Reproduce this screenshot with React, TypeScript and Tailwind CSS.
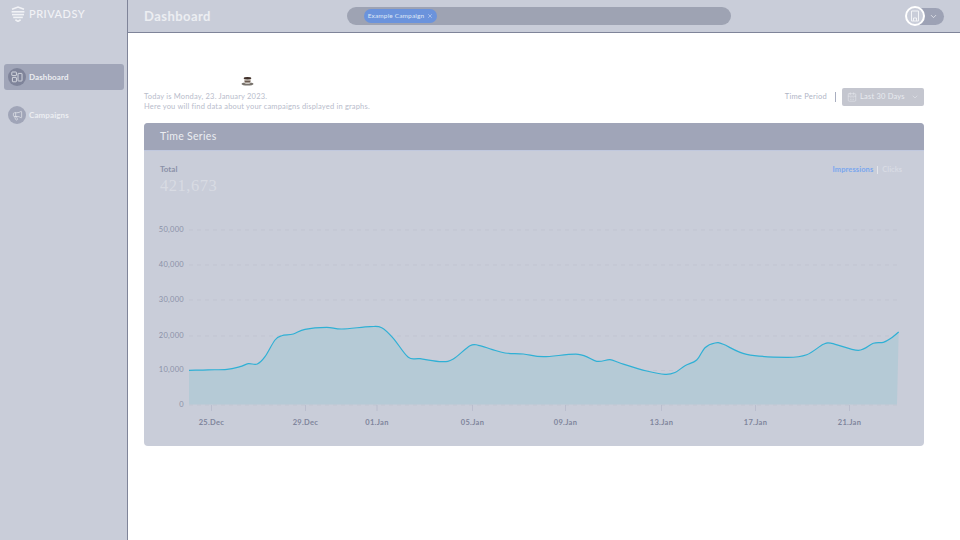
import { CalendarDays, ChevronDown, Megaphone, X } from "lucide-react";

const points: [number, number][] = [
  [189, 370.3], [208, 369.9], [227, 369.3], [240, 366.7], [248.3, 363.7], [257.3, 364], [265, 356.7], [275, 340],
  [281.7, 335.7], [293.3, 334], [305, 329.3], [326.7, 327.3], [341.7, 329], [370, 326.7], [381.7, 327.7], [393.3, 338.3],
  [408.3, 357.3], [420, 358.7], [441.7, 361.7], [453.3, 359], [470, 345.7], [478.3, 345.3], [491.7, 349.3], [505, 353],
  [523.3, 354], [543.3, 356.7], [578.3, 354.3], [596.7, 361.3], [610, 359.7], [620, 363], [646.7, 371], [665, 374.3],
  [675, 372.5], [685, 365.7], [696.7, 360], [705, 347.7], [715, 343], [723.3, 344.3], [746.7, 354.3], [786.7, 357.3],
  [806.7, 354.7], [823.3, 344.3], [831.7, 343.3], [858.3, 350.3], [873.3, 343.3], [883.3, 342.3], [891.7, 337.7], [898.7, 332],
];

function smooth(pts: [number, number][]) {
  let d = `M${pts[0][0]} ${pts[0][1]}`;
  for (let i = 0; i < pts.length - 1; i++) {
    const p0 = pts[Math.max(i - 1, 0)];
    const p1 = pts[i];
    const p2 = pts[i + 1];
    const p3 = pts[Math.min(i + 2, pts.length - 1)];
    const c1x = p1[0] + (p2[0] - p0[0]) / 6;
    const c1y = p1[1] + (p2[1] - p0[1]) / 6;
    const c2x = p2[0] - (p3[0] - p1[0]) / 6;
    const c2y = p2[1] - (p3[1] - p1[1]) / 6;
    d += ` C${c1x.toFixed(1)} ${c1y.toFixed(1)} ${c2x.toFixed(1)} ${c2y.toFixed(1)} ${p2[0]} ${p2[1]}`;
  }
  return d;
}

const yAxis = [
  { label: "50,000", y: 230 },
  { label: "40,000", y: 265 },
  { label: "30,000", y: 300 },
  { label: "20,000", y: 336 },
  { label: "10,000", y: 370.5 },
  { label: "0", y: 405 },
];

const xAxis = [
  { label: "25.Dec", x: 211.5 },
  { label: "29.Dec", x: 305.5 },
  { label: "01.Jan", x: 377 },
  { label: "05.Jan", x: 472.5 },
  { label: "09.Jan", x: 565.5 },
  { label: "13.Jan", x: 661.5 },
  { label: "17.Jan", x: 755.5 },
  { label: "21.Jan", x: 849.5 },
];

const Logo = () => (
  <svg width="14" height="16" viewBox="0 0 14 16" fill="none" stroke="#f1f2f6" strokeWidth="1.6">
    <path d="M1 3.2 7 1l6 2.2" />
    <path d="M.6 5.8h12.8" />
    <path d="M1 8.6h12" />
    <path d="M2.2 11.4h9.6" />
    <path d="M4.4 13.8 7 15.4l2.6-1.6" />
  </svg>
);

const DashboardIcon = () => (
  <svg width="12" height="12" viewBox="0 0 12 12" fill="none" stroke="#e9ebf0" strokeWidth="0.8">
    <rect x="0.8" y="1" width="4.6" height="3.6" rx="0.5" />
    <rect x="1.4" y="6.4" width="4" height="4.4" rx="0.5" />
    <rect x="7" y="2.4" width="4" height="7.6" rx="0.5" />
  </svg>
);

const Coffee = () => (
  <svg width="13" height="10" viewBox="0 0 13 10">
    <ellipse cx="6.5" cy="8" rx="6" ry="1.6" fill="#77726c" />
    <path d="M2.8 2h7.4l-.9 5.2c-1.6.8-4 .8-5.6 0z" fill="#e9e5de" />
    <ellipse cx="6.5" cy="2.2" rx="3.8" ry="1.2" fill="#40302a" />
    <path d="M3.4 4.4h6.2l-.4 2.2H3.8z" fill="#6a5a50" />
  </svg>
);

export default function App() {
  return (
    <div className="flex h-[540px] w-[960px] overflow-hidden bg-white font-['Lato',sans-serif]">
      <aside className="flex w-[128px] shrink-0 flex-col border-r border-[#7f8499] bg-[#c9cdd9]">
        <div className="flex h-[28px] items-center gap-[4px] pl-[11px]">
          <Logo />
          <span className="text-[11px] font-medium tracking-[0.5px] text-[#f1f2f6]">PRIVADSY</span>
        </div>
        <nav className="mt-[36px] flex flex-col gap-[12px] pl-[4px] pr-[3px]">
          <a className="flex h-[26px] items-center gap-[3px] rounded-[3px] bg-[#a0a5b8] pl-[4px]">
            <span className="flex h-[18px] w-[18px] items-center justify-center rounded-full bg-[#7f849a]">
              <DashboardIcon />
            </span>
            <span className="text-[8px] font-bold tracking-[0.1px] text-[#eceef2]">Dashboard</span>
          </a>
          <a className="flex h-[26px] items-center gap-[3px] rounded-[3px] pl-[4px]">
            <span className="flex h-[18px] w-[18px] items-center justify-center rounded-full bg-[#a0a5b8]">
              <Megaphone size={11} color="#e9ebf0" strokeWidth={1.4} />
            </span>
            <span className="text-[8px] font-bold tracking-[0.1px] text-[#eceef2]">Campaigns</span>
          </a>
        </nav>
      </aside>

      <div className="flex min-w-0 flex-1 flex-col">
        <header className="flex h-[33px] shrink-0 items-center border-b border-[#7f8499] bg-[#c9cdd9] pl-[16px] pr-[16px]">
          <h1 className="w-[203px] pt-[1px] text-[13px] font-bold tracking-[0.45px] text-[#eceef2]">Dashboard</h1>
          <div className="flex h-[18px] w-[384px] items-center rounded-full bg-[#9ea3b3] pl-[17px]">
            <span className="flex h-[14px] w-[73px] items-center justify-center gap-[3px] rounded-full bg-[#6b93dc] text-[6.5px] tracking-[0.15px] text-[#dfe7f6]">
              Example Campaign
              <X size={6} strokeWidth={2} />
            </span>
          </div>
          <div className="relative ml-auto flex h-[17px] w-[38px] items-center justify-end rounded-full bg-[#9da2b5] pr-[6px]">
            <ChevronDown size={9} color="#eceef2" strokeWidth={2} />
            <span className="absolute -left-[1px] -top-[2px] flex h-[20px] w-[20px] items-center justify-center rounded-full border-2 border-white bg-[#c9cdd9]">
              <svg width="10" height="12" viewBox="0 0 10 12" fill="none" stroke="#f2f3f6" strokeWidth="1">
                <path d="M1.5 1h7v10H1.5z" />
                <path d="M3.5 11V8h3v3" />
              </svg>
            </span>
          </div>
        </header>

        <main className="flex flex-1 flex-col pl-[16px] pr-[36px]">
          <div className="h-[41px] pl-[97px] pt-[43px]">
            <Coffee />
          </div>
          <div className="mt-[16px] flex items-start justify-between">
            <div className="text-[7.5px] leading-[10px] tracking-[0.18px] text-[#b8bccb]">
              <p>Today is Monday, 23. January 2023.</p>
              <p>Here you will find data about your campaigns displayed in graphs.</p>
            </div>
            <div className="-mt-[4px] flex items-center">
              <span className="text-[7.5px] tracking-[0.25px] text-[#b0b5c6]">Time Period</span>
              <span className="ml-[8px] h-[10px] w-[1px] bg-[#a9aec0]" />
              <button className="ml-[6px] flex h-[18px] w-[82px] items-center rounded-[2px] bg-[#c4c6cf] pl-[5px] text-[7.5px] tracking-[0.2px] text-[#e9ebf0]">
                <CalendarDays size={10} strokeWidth={1.3} />
                <span className="ml-[3px]">Last 30 Days</span>
                <ChevronDown size={8} strokeWidth={1.6} className="ml-auto mr-[5px]" />
              </button>
            </div>
          </div>

          <section className="mt-[11px] h-[323px] overflow-hidden rounded-[4px] bg-[#c9cdd9]">
            <div className="flex h-[28px] items-center border-b border-[#c0c8de] bg-[#a0a5b8] pl-[16px] pt-[1px] text-[10.5px] tracking-[0.3px] text-[#eceef2]">
              Time Series
            </div>
            <div className="relative">
              <div className="absolute left-[16px] top-[14px]">
                <div className="text-[8px] font-bold leading-[9px] text-[#8b91a8]">Total</div>
                <div className="mt-[3px] font-['Liberation_Serif',serif] text-[16.5px] leading-[18px] tracking-[0.5px] text-[#d8dbe3]">421,673</div>
              </div>
              <div className="absolute right-[22px] top-[14px] flex items-center text-[7.5px] font-bold leading-[9px]">
                <span className="tracking-[0.1px] text-[#7aa7ee]">Impressions</span>
                <span className="mx-[4px] h-[8px] w-[1px] bg-[#e3e5eb]" />
                <span className="text-[#d8dbe4]">Clicks</span>
              </div>
              <svg width="780" height="295" viewBox="144 151 780 295" className="block font-['Lato',sans-serif]">
                {yAxis.map((t) => (
                  <line key={t.y} x1="189" x2="897" y1={t.y} y2={t.y} stroke="#bdc1ce" strokeWidth="0.7" strokeDasharray="4 4" />
                ))}
                {xAxis.map((t) => (
                  <line key={t.x} x1={t.x} x2={t.x} y1="405" y2="411" stroke="#b3b8c8" strokeWidth="0.7" />
                ))}
                <path d={`${smooth(points)} L897 404.5 L189 404.5 Z`} fill="#b5cad6" />
                <path d={smooth(points)} fill="none" stroke="#2fb0d5" strokeWidth="1.2" />
                {yAxis.map((t) => (
                  <text key={t.label} x="184" y={t.y + 1.5} textAnchor="end" fontSize="7.5" letterSpacing="0.3" fill="#8b91a8">{t.label}</text>
                ))}
                {xAxis.map((t) => (
                  <text key={t.label} x={t.x} y="424.5" textAnchor="middle" fontSize="7.5" fontWeight="700" letterSpacing="0.3" fill="#7f859c">{t.label}</text>
                ))}
              </svg>
            </div>
          </section>
        </main>
      </div>
    </div>
  );
}
